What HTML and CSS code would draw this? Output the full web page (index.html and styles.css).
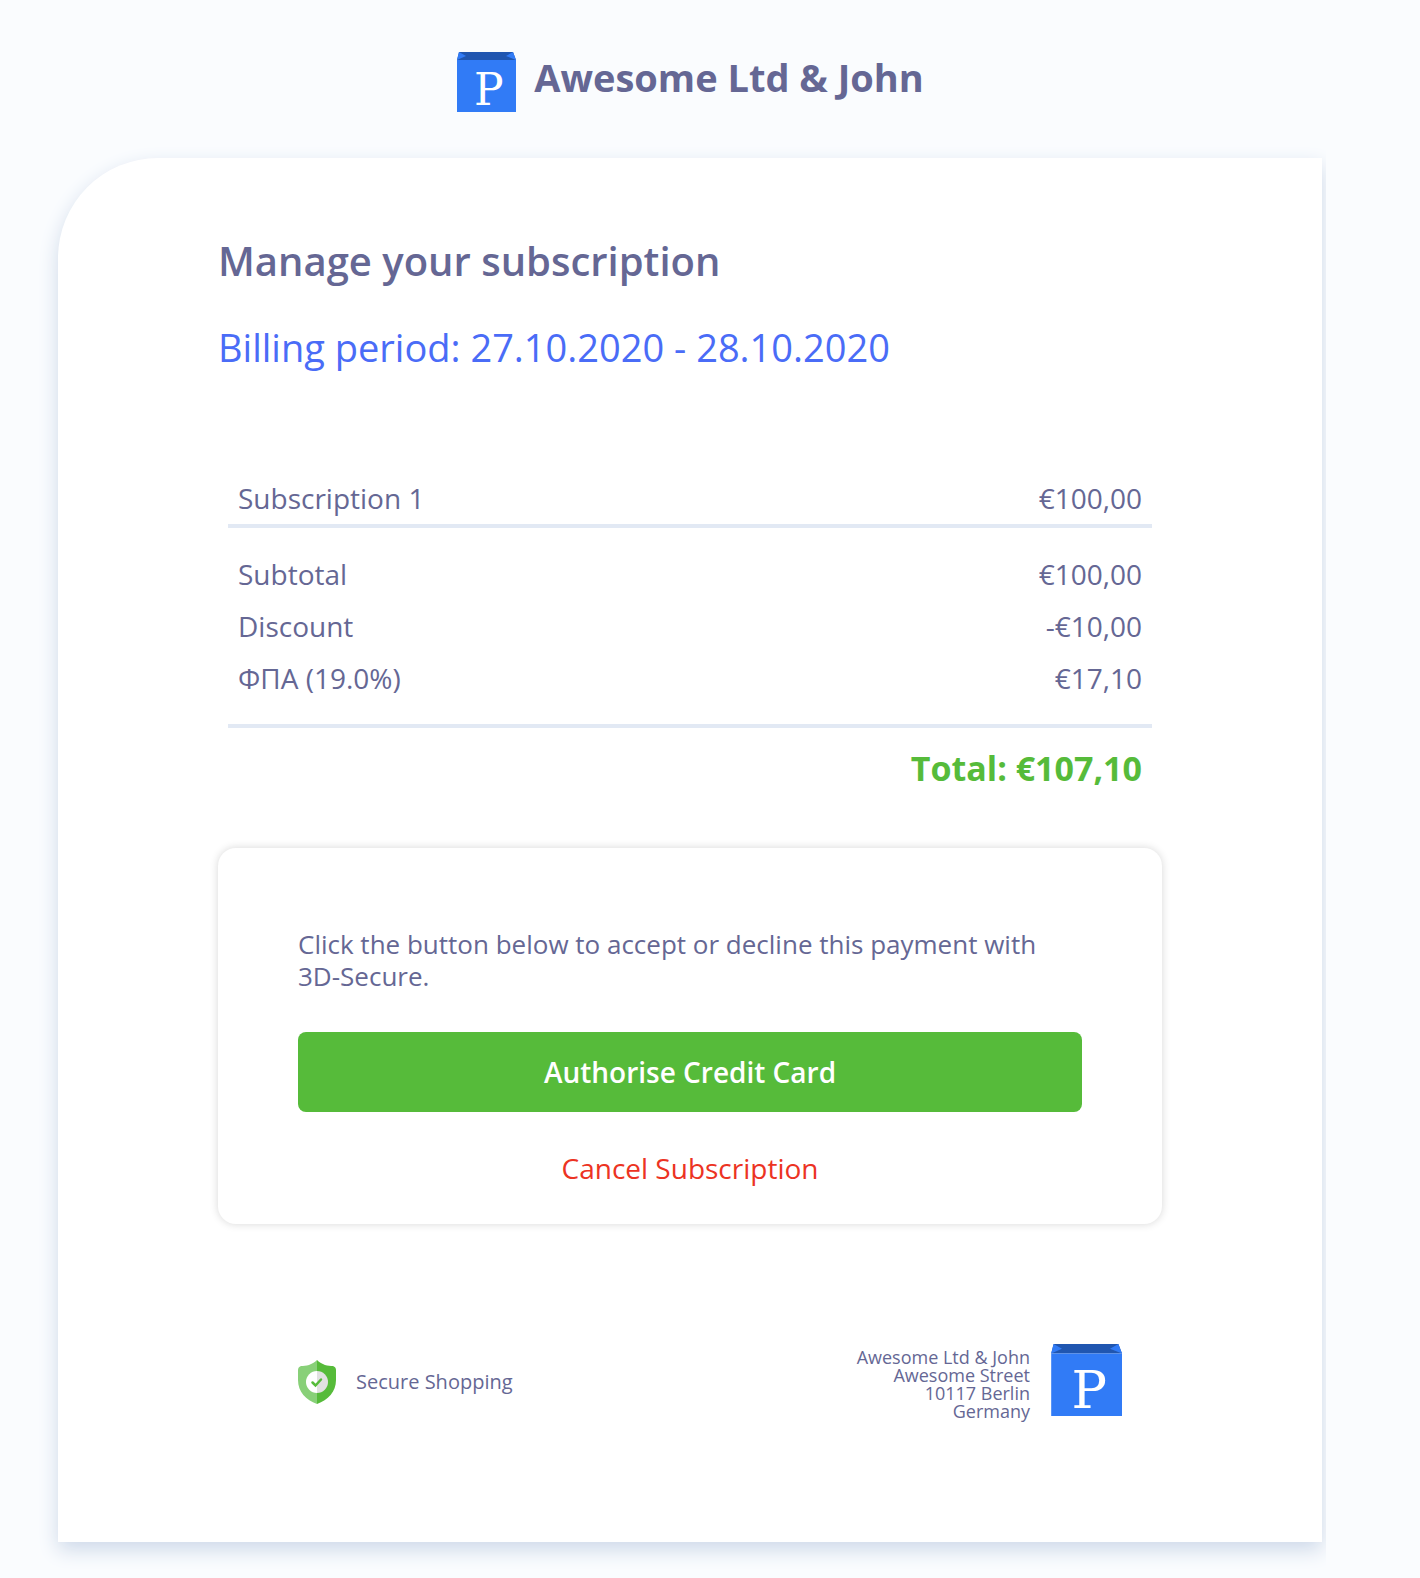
FILE: index.html
```html
<!DOCTYPE html>
<html lang="en">
<head>
    <meta charset="UTF-8">
    <meta name="viewport" content="width=device-width, initial-scale=1.0">
    <title>Manage your subscription</title>
    <link rel="stylesheet" href="styles.css">
</head>
<body>
    <svg class="sprite" aria-hidden="true">
        <symbol id="logo" viewBox="0 0 60 60">
            <path fill="#2056b0" d="M3 0h54l3 8H1z"/>
            <path fill="#317bf6" d="M3 0l7 4-9 4zM57 0l-7 4 10 4z"/>
            <path fill="#317bf6" d="M1 8h59v52H1z"/>
            <text class="logo-letter" x="18" y="53">P</text>
        </symbol>
    </svg>

    <div class="page">
        <header class="brand">
            <svg class="brand-logo" role="img" aria-label="Logo"><use href="#logo"/></svg>
            <span class="brand-name">Awesome Ltd &amp; John</span>
        </header>

        <main class="card">
            <h1>Manage your subscription</h1>
            <p class="period">Billing period: 27.10.2020 - 28.10.2020</p>

            <div class="summary">
                <table class="items">
                    <tr><th scope="row">Subscription 1</th><td>€100,00</td></tr>
                </table>
                <table class="totals">
                    <tr><th scope="row">Subtotal</th><td>€100,00</td></tr>
                    <tr><th scope="row">Discount</th><td>-€10,00</td></tr>
                    <tr><th scope="row">ΦΠΑ (19.0%)</th><td>€17,10</td></tr>
                </table>
                <p class="total">Total: €107,10</p>
            </div>

            <section class="payment">
                <p>Click the button below to accept or decline this payment with 3D-Secure.</p>
                <button class="btn-authorise" type="button">Authorise Credit Card</button>
                <a class="cancel" href="#cancel">Cancel Subscription</a>
            </section>

            <footer>
                <div class="secure">
                    <svg class="shield" viewBox="0 0 38 44" aria-hidden="true">
                        <path fill="#88d078" d="M19 0C14 5 8 6 3 6Q0 7 0 10v10c0 12 8 20 19 24z"/>
                        <path fill="#56bb3a" d="M19 0c5 5 11 6 16 6q3 1 3 4v10c0 12-8 20-19 24z"/>
                        <path fill="#fff" d="M19 11a11 11 0 0 0 0 22z"/>
                        <path fill="#e1e1e1" d="M19 11a11 11 0 0 1 0 22z"/>
                        <path fill="none" stroke="#56bb3a" stroke-width="2.5" stroke-linecap="round" d="M14.5 22.5l3 3 5.5-6"/>
                    </svg>
                    <span>Secure Shopping</span>
                </div>
                <div class="company">
                    <address>
                        Awesome Ltd &amp; John<br>
                        Awesome Street<br>
                        10117 Berlin<br>
                        Germany
                    </address>
                    <svg class="company-logo" role="img" aria-label="Logo"><use href="#logo"/></svg>
                </div>
            </footer>
        </main>
    </div>
</body>
</html>
```

FILE: styles.css
```css
* {
    margin: 0;
    padding: 0;
    box-sizing: border-box;
}

body {
    font-family: 'Open Sans', 'Noto Sans', Arial, sans-serif;
    font-size: 28px;
    line-height: 32px;
    color: #656794;
    background: #fafcfe;
}

.sprite {
    position: absolute;
    width: 0;
    height: 0;
}

.logo-letter {
    font-family: 'DejaVu Serif', serif;
    font-size: 44px;
    fill: #fff;
}

.page {
    padding: 52px 98px 36px 58px;
}

.brand {
    display: flex;
    justify-content: center;
    gap: 18px;
    margin-bottom: 46px;
}

.brand-logo {
    width: 60px;
    height: 60px;
}

.brand-name {
    font-size: 38px;
    font-weight: 700;
    line-height: 50px;
}

/* the shadow is cut short on the right side */
.card {
    padding: 80px 160px 122px;
    background: #fff;
    border-top-left-radius: 100px;
    box-shadow: 0 8px 20px #ced9e9;
    clip-path: inset(-40px -4px -40px -40px);
}

h1 {
    font-size: 40px;
    font-weight: 600;
    line-height: 46px;
    margin-bottom: 40px;
}

.period {
    font-size: 38px;
    line-height: 46px;
    color: #4a6cf7;
    margin-bottom: 102px;
}

.summary {
    padding: 0 10px;
    margin-bottom: 62px;
}

table {
    width: 100%;
    border-collapse: collapse;
}

th,
td {
    padding: 10px;
    font-weight: 400;
    text-align: left;
}

td {
    text-align: right;
}

.items {
    border-bottom: 4px solid #e2e9f4;
}

.totals {
    margin-top: 20px;
}

.total {
    margin-top: 20px;
    padding: 22px 10px 0;
    border-top: 4px solid #e2e9f4;
    font-size: 34px;
    font-weight: 700;
    line-height: 36px;
    text-align: right;
    color: #56bb3a;
}

.payment {
    display: flex;
    flex-direction: column;
    padding: 80px 80px 40px;
    border-radius: 18px;
    box-shadow: 0 0 8px rgba(0, 0, 0, 0.16);
    margin-bottom: 120px;
}

.payment p {
    font-size: 26px;
    margin-bottom: 40px;
}

.btn-authorise {
    height: 80px;
    border: none;
    border-radius: 8px;
    background: #56bb3a;
    color: #fff;
    font: inherit;
    font-weight: 600;
    cursor: pointer;
}

.cancel {
    align-self: center;
    margin-top: 40px;
    color: #ec3323;
    text-decoration: none;
}

.cancel:hover {
    text-decoration: underline;
}

footer {
    display: flex;
    justify-content: space-between;
    padding: 0 40px 0 80px;
}

.secure,
.company {
    display: flex;
    align-items: center;
    gap: 20px;
}

.secure {
    font-size: 20px;
}

.shield {
    width: 38px;
    height: 44px;
}

.company {
    align-items: flex-start;
}

address {
    padding-top: 4px;
    font-size: 18px;
    font-style: normal;
    line-height: 18px;
    text-align: right;
}

.company-logo {
    width: 72px;
    height: 72px;
}
```
